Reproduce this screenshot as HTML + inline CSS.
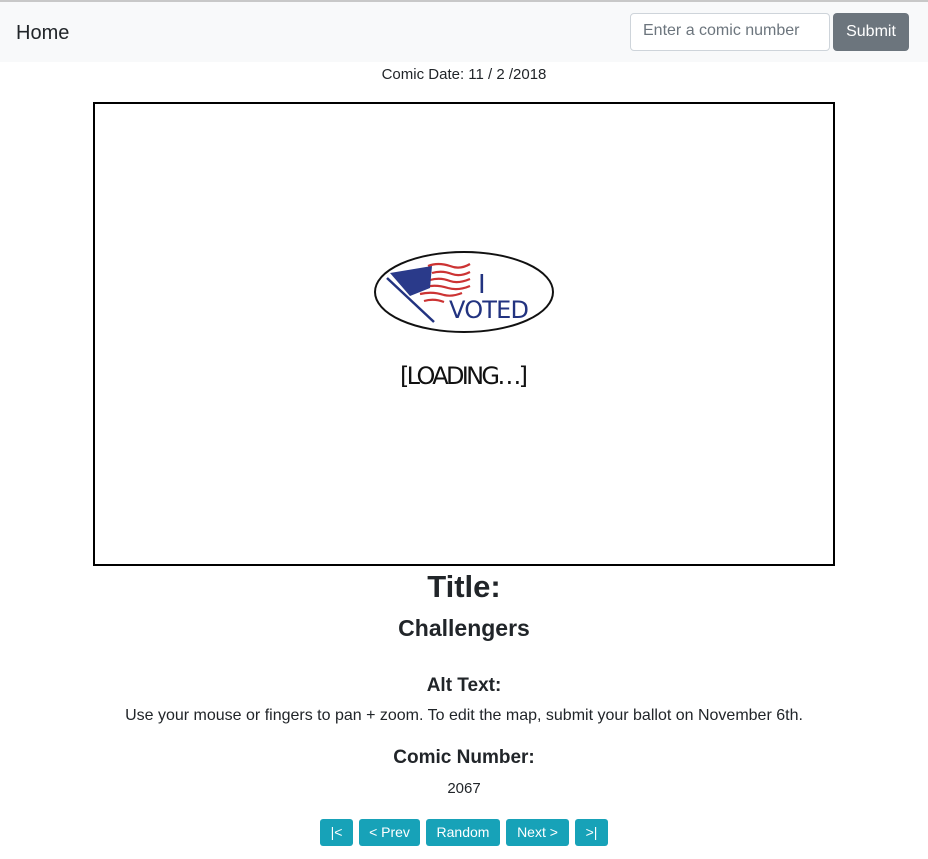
<!DOCTYPE html>
<html><head><meta charset="utf-8"><style>
*{box-sizing:border-box;margin:0;padding:0}
body{width:928px;height:859px;background:#fff;font-family:"Segoe UI","Liberation Sans",sans-serif;color:#212529;position:relative;overflow:hidden}
.top{position:absolute;left:0;top:0;width:928px;height:2px;background:#c8c8c8}
.nav{position:absolute;left:0;top:2px;width:928px;height:60px;background:#f8f9fa}
.home{position:absolute;left:16px;top:20px;font-size:20px;color:#212529}
.inp{position:absolute;left:630px;top:11px;width:200px;height:38px;border:1px solid #ced4da;border-radius:4px;background:#fff;font-size:16px;color:#6c757d;padding:8px 12px}
.sub{position:absolute;left:833px;top:11px;width:76px;height:38px;border-radius:4px;background:#6c757d;color:#fff;font-size:16px;text-align:center;line-height:38px}
.c{position:absolute;left:0;width:928px;text-align:center}
.box{position:absolute;left:93px;top:102px;width:742px;height:464px;border:2px solid #000}
.btn{position:absolute;top:819px;height:27px;background:#17a2b8;color:#fff;border-radius:3px;font-size:14px;text-align:center;line-height:27px}
</style></head><body>
<div class="top"></div>
<div class="nav"><div class="home">Home</div>
<div class="inp">Enter a comic number</div><div class="sub">Submit</div></div>
<div class="c" style="top:66px;font-size:15px">Comic Date: 11 / 2 /2018</div>
<div class="box"></div>
<svg style="position:absolute;left:360px;top:240px" width="210" height="160" viewBox="0 0 210 160">
<ellipse cx="104" cy="52" rx="89" ry="40" fill="none" stroke="#111" stroke-width="2"/>
<g stroke="#cc3333" stroke-width="2.2" fill="none">
<path d="M68 26 q10 -4 22 0 q10 4 20 -2"/><path d="M72 33 q10 -3 20 1 q8 3 18 -2"/>
<path d="M70 40 q10 -3 20 1 q8 3 20 -2"/><path d="M64 47 q12 -3 24 1 q10 3 22 -2"/>
<path d="M60 54 q12 -3 24 1 q8 2 18 -2"/><path d="M64 61 q10 -3 20 1"/></g>
<path d="M30 33 L72 26 L70 48 L50 56 Z" fill="#2a3a8a"/>
<path d="M27 38 L74 82" stroke="#223380" stroke-width="2.5"/>
<text x="118" y="53" font-family="DejaVu Sans,sans-serif" font-size="26" fill="#223380">I</text>
<text x="89" y="78" font-family="DejaVu Sans,sans-serif" font-size="24" fill="#223380" textLength="80">VOTED</text>
<text x="40" y="144" font-family="DejaVu Sans,sans-serif" font-size="24" fill="#111" textLength="128">[LOADING…]</text>
</svg>
<div class="c" style="top:569px;font-size:31px;font-weight:600">Title:</div>
<div class="c" style="top:615px;font-size:23px;font-weight:600">Challengers</div>
<div class="c" style="top:675px;font-size:19px;font-weight:600">Alt Text:</div>
<div class="c" style="top:707px;font-size:16px">Use your mouse or fingers to pan + zoom. To edit the map, submit your ballot on November 6th.</div>
<div class="c" style="top:747px;font-size:19px;font-weight:600">Comic Number:</div>
<div class="c" style="top:780px;font-size:15px">2067</div>
<div class="btn" style="left:320px;width:33px">|&lt;</div>
<div class="btn" style="left:359px;width:61px">&lt; Prev</div>
<div class="btn" style="left:426px;width:74px">Random</div>
<div class="btn" style="left:506px;width:63px">Next &gt;</div>
<div class="btn" style="left:575px;width:33px">&gt;|</div>
</body></html>
